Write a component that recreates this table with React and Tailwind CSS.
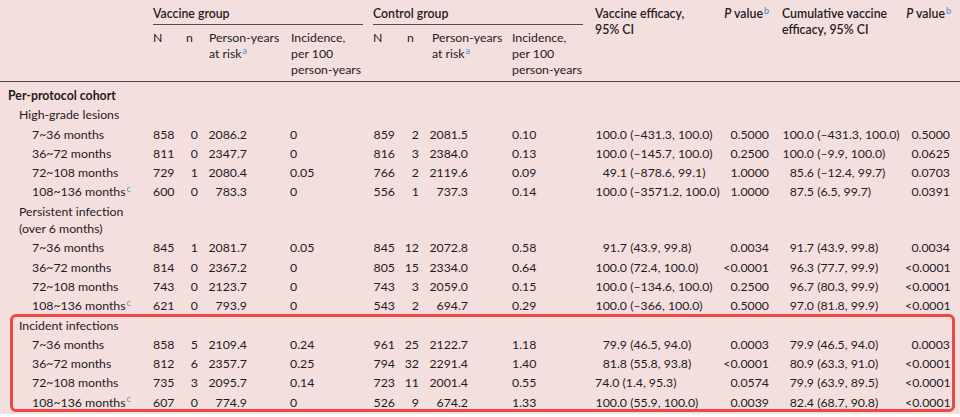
const ROWS = [
  { label: "Per-protocol cohort", level: 0, bold: true },
  { label: "High-grade lesions", level: 1 },
  { label: "7~36 months", level: 2, v: ["858", "0", "2086.2", "0"], c: ["859", "2", "2081.5", "0.10"], ve: ["100.0", "(–431.3, 100.0)"], p: "0.5000", cum: ["100.0", "(–431.3, 100.0)"], p2: "0.5000" },
  { label: "36~72 months", level: 2, v: ["811", "0", "2347.7", "0"], c: ["816", "3", "2384.0", "0.13"], ve: ["100.0", "(–145.7, 100.0)"], p: "0.2500", cum: ["100.0", "(–9.9, 100.0)"], p2: "0.0625" },
  { label: "72~108 months", level: 2, v: ["729", "1", "2080.4", "0.05"], c: ["766", "2", "2119.6", "0.09"], ve: ["49.1", "(–878.6, 99.1)"], p: "1.0000", cum: ["85.6", "(–12.4, 99.7)"], p2: "0.0703" },
  { label: "108~136 months", sup: "c", level: 2, v: ["600", "0", "783.3", "0"], c: ["556", "1", "737.3", "0.14"], ve: ["100.0", "(–3571.2, 100.0)"], p: "1.0000", cum: ["87.5", "(6.5, 99.7)"], p2: "0.0391" },
  { label: "Persistent infection", label2: "(over 6 months)", level: 1 },
  { label: "7~36 months", level: 2, v: ["845", "1", "2081.7", "0.05"], c: ["845", "12", "2072.8", "0.58"], ve: ["91.7", "(43.9, 99.8)"], p: "0.0034", cum: ["91.7", "(43.9, 99.8)"], p2: "0.0034" },
  { label: "36~72 months", level: 2, v: ["814", "0", "2367.2", "0"], c: ["805", "15", "2334.0", "0.64"], ve: ["100.0", "(72.4, 100.0)"], p: "<0.0001", cum: ["96.3", "(77.7, 99.9)"], p2: "<0.0001" },
  { label: "72~108 months", level: 2, v: ["743", "0", "2123.7", "0"], c: ["743", "3", "2059.0", "0.15"], ve: ["100.0", "(–134.6, 100.0)"], p: "0.2500", cum: ["96.7", "(80.3, 99.9)"], p2: "<0.0001" },
  { label: "108~136 months", sup: "c", level: 2, v: ["621", "0", "793.9", "0"], c: ["543", "2", "694.7", "0.29"], ve: ["100.0", "(–366, 100.0)"], p: "0.5000", cum: ["97.0", "(81.8, 99.9)"], p2: "<0.0001" },
];

const INCIDENT = [
  { label: "Incident infections", level: 1 },
  { label: "7~36 months", level: 2, v: ["858", "5", "2109.4", "0.24"], c: ["961", "25", "2122.7", "1.18"], ve: ["79.9", "(46.5, 94.0)"], p: "0.0003", cum: ["79.9", "(46.5, 94.0)"], p2: "0.0003" },
  { label: "36~72 months", level: 2, v: ["812", "6", "2357.7", "0.25"], c: ["794", "32", "2291.4", "1.40"], ve: ["81.8", "(55.8, 93.8)"], p: "<0.0001", cum: ["80.9", "(63.3, 91.0)"], p2: "<0.0001" },
  { label: "72~108 months", level: 2, v: ["735", "3", "2095.7", "0.14"], c: ["723", "11", "2001.4", "0.55"], ve: ["74.0", "(1.4, 95.3)"], veLeft: true, p: "0.0574", cum: ["79.9", "(63.9, 89.5)"], p2: "<0.0001" },
  { label: "108~136 months", sup: "c", level: 2, v: ["607", "0", "774.9", "0"], c: ["526", "9", "674.2", "1.33"], ve: ["100.0", "(55.9, 100.0)"], p: "0.0039", cum: ["82.4", "(68.7, 90.8)"], p2: "<0.0001" },
];

const sup = "text-[9px] ml-[1px] text-[#3d9ad1]";
const indent = ["pl-[8px]", "pl-[19px]", "pl-[32px]"];

function Est({ val, left }) {
  return (
    <>
      <span className={left ? "" : "inline-block w-[32px] text-right"}>{val[0]}</span> {val[1]}
    </>
  );
}

function Row({ r }) {
  return (
    <div className="flex whitespace-nowrap py-[1px] leading-[17.3px]">
      <div className={`w-[153px] shrink-0 ${indent[r.level]} ${r.bold ? "font-bold" : ""}`}>
        {r.label}
        {r.sup && <sup className={sup}>{r.sup}</sup>}
        {r.label2 && <div>{r.label2}</div>}
      </div>
      {r.v && (
        <>
          <div className="w-[21px] shrink-0 text-right">{r.v[0]}</div>
          <div className="w-[24px] shrink-0 text-right">{r.v[1]}</div>
          <div className="w-[49px] shrink-0 text-right">{r.v[2]}</div>
          <div className="w-[126px] shrink-0 pl-[43px]">{r.v[3]}</div>
          <div className="w-[22px] shrink-0 text-right">{r.c[0]}</div>
          <div className="w-[24px] shrink-0 text-right">{r.c[1]}</div>
          <div className="w-[49px] shrink-0 text-right">{r.c[2]}</div>
          <div className="w-[127px] shrink-0 pl-[44px]">{r.c[3]}</div>
          <div className="w-[125px] shrink-0"><Est val={r.ve} left={r.veLeft} /></div>
          <div className="w-[49px] shrink-0 text-right">{r.p}</div>
          <div className="w-[136px] shrink-0 pl-[13px]"><Est val={r.cum} /></div>
          <div className="w-[45px] shrink-0 text-right">{r.p2}</div>
        </>
      )}
    </div>
  );
}

function GroupHead({ title, cols }) {
  return (
    <div className="w-[210px] shrink-0">
      <div className="border-b border-[#544848] pb-[2px] font-semibold">{title}</div>
      <div className="mt-[5px] flex">
        <div className={cols[0]}>N</div>
        <div className={cols[1]}>n</div>
        <div className={cols[2]}>Person-years<br />at risk<sup className={sup}>a</sup></div>
        <div>Incidence,<br />per 100<br />person-years</div>
      </div>
    </div>
  );
}

export default function App() {
  return (
    <div className="h-[414px] w-[960px] overflow-hidden bg-[#f4dfdf] font-['Lato','Liberation_Sans',sans-serif] text-[12.3px] text-[#1f1b1c]">
      <div className="flex whitespace-nowrap border-b border-[#544848] pb-[3px] pt-[6px] leading-4">
        <div className="w-[153px] shrink-0" />
        <GroupHead title="Vaccine group" cols={["w-[33px]", "w-[23px]", "w-[82px]"]} />
        <div className="w-[10px] shrink-0" />
        <GroupHead title="Control group" cols={["w-[34px]", "w-[25px]", "w-[80px]"]} />
        <div className="w-[12px] shrink-0" />
        <div className="w-[125px] shrink-0 font-semibold leading-[15.5px]">Vaccine efficacy,<br />95% CI</div>
        <div className="w-[49px] shrink-0 text-right font-semibold"><i>P</i> value<sup className={sup}>b</sup></div>
        <div className="w-[136px] shrink-0 pl-[13px] font-semibold leading-[15.5px]">Cumulative vaccine<br />efficacy, 95% CI</div>
        <div className="w-[46px] shrink-0 text-right font-semibold"><i>P</i> value<sup className={sup}>b</sup></div>
      </div>

      <div className="pt-[4px]">
        {ROWS.map((r, i) => <Row key={i} r={r} />)}
        <div className="-mt-[2px] ml-[10px] mr-[5px] rounded-[6px] border-[3px] border-[#ef4646]">
          <div className="-mb-[3px] -ml-[13px] -mr-[8px] -mt-[1px]">
            {INCIDENT.map((r, i) => <Row key={i} r={r} />)}
          </div>
        </div>
      </div>
    </div>
  );
}
